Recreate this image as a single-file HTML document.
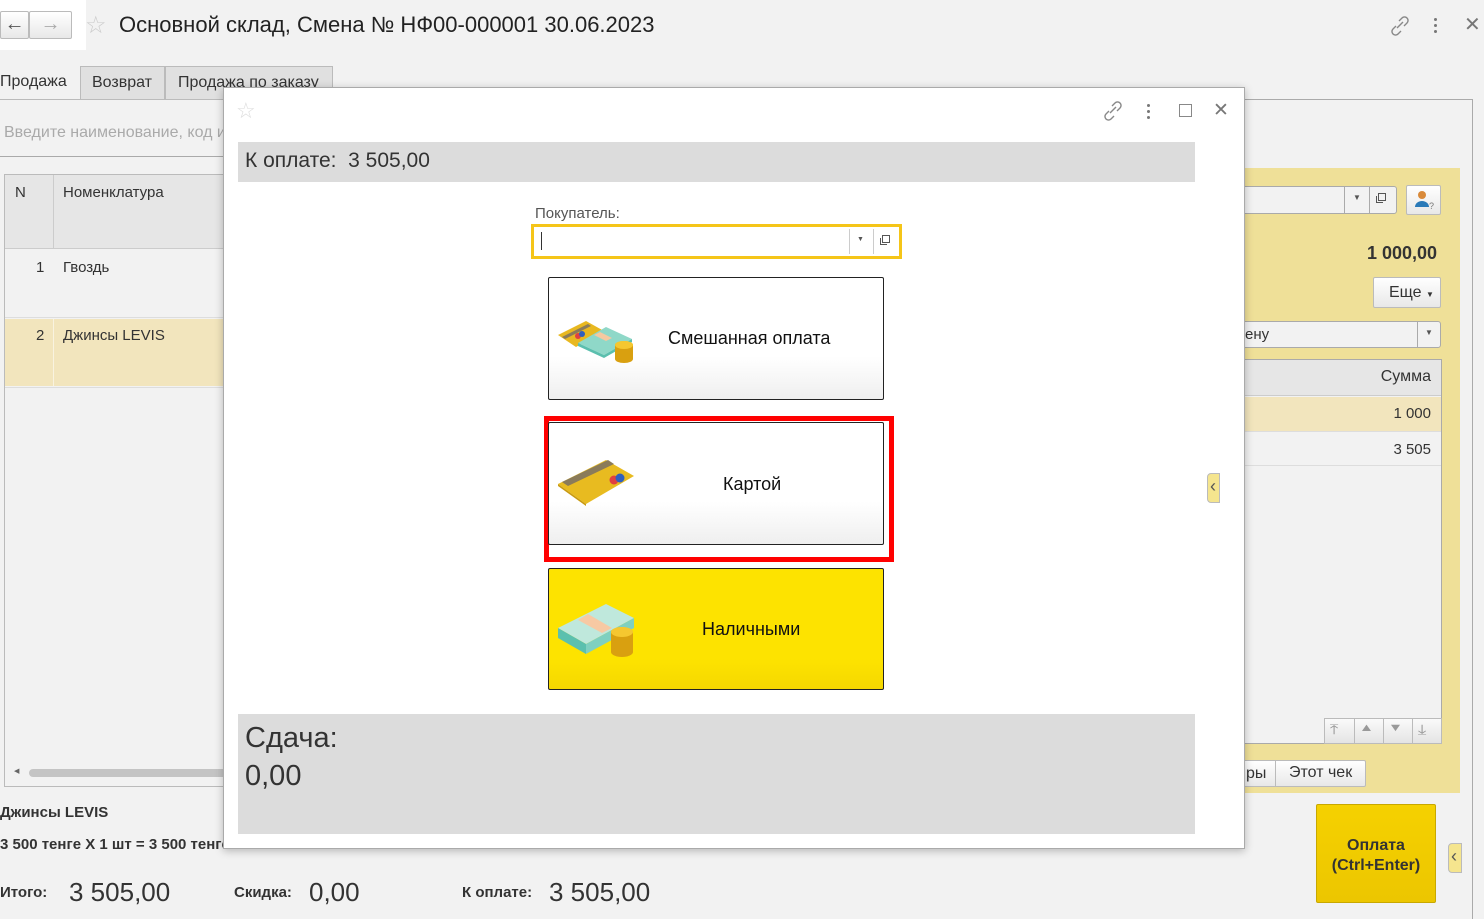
<!DOCTYPE html>
<html><head><meta charset="utf-8"><style>
*{box-sizing:border-box;margin:0;padding:0}
body{width:1484px;height:919px;overflow:hidden;background:#f2f2f2;font-family:"Liberation Sans",Arial,sans-serif;color:#333;position:relative}
.a{position:absolute}
.btnp{border:1px solid #bbb;border-radius:2px;background:linear-gradient(#fff,#e8e8e8)}
</style></head><body>
<!-- top nav -->
<div class="a" style="left:0;top:0;width:86px;height:50px;background:#fff"></div>
<div class="a btnp" style="left:0;top:11px;width:29px;height:28px;font-size:20px;font-weight:bold;color:#555;text-align:center;line-height:25px">&#8592;</div>
<div class="a btnp" style="left:29px;top:11px;width:43px;height:28px;font-size:20px;font-weight:bold;color:#aaa;text-align:center;line-height:25px">&#8594;</div>
<div class="a" style="left:85px;top:11px;font-size:24px;color:#ccc">&#9734;</div>
<div class="a" style="left:119px;top:12px;font-size:22px;color:#222">Основной склад, Смена № НФ00-000001 30.06.2023</div>
<svg class="a" style="left:1388px;top:15px" width="24" height="22" viewBox="0 0 24 22"><g fill="none" stroke="#888" stroke-width="1.4"><path d="M9 13 L15 7"/><path d="M11 6 l3-3 a3 3 0 0 1 5 5 l-3 3"/><path d="M13 16 l-3 3 a3 3 0 0 1 -5 -5 l3 -3"/></g></svg>
<div class="a" style="left:1434px;top:18px;width:4px"><div style="width:3px;height:3px;background:#777;border-radius:50%;margin-bottom:3px"></div><div style="width:3px;height:3px;background:#777;border-radius:50%;margin-bottom:3px"></div><div style="width:3px;height:3px;background:#777;border-radius:50%"></div></div>
<div class="a" style="left:1464px;top:12px;font-size:20px;color:#777">&#10005;</div>

<!-- tabs -->
<div class="a" style="left:0;top:66px;width:80px;height:34px;background:#f2f2f2;font-size:16px;padding:7px 0 0 0">Продажа</div>
<div class="a" style="left:80px;top:66px;width:85px;height:33px;background:#e0e0e0;border:1px solid #bbb;border-bottom:none;font-size:16px;padding:7px 0 0 11px">Возврат</div>
<div class="a" style="left:165px;top:66px;width:168px;height:33px;background:#e0e0e0;border:1px solid #bbb;border-bottom:none;font-size:16px;padding:7px 0 0 12px">Продажа по заказу</div>
<div class="a" style="left:0;top:99px;width:1245px;height:1px;background:#bbb"></div>
<div class="a" style="left:4px;top:124px;font-size:16px;color:#aaa">Введите наименование, код и</div>
<div class="a" style="left:0;top:156px;width:230px;height:1px;background:#aaa"></div>

<!-- left table -->
<div class="a" style="left:4px;top:174px;width:220px;height:613px;border:1px solid #bbb;background:#f2f2f2"></div>
<div class="a" style="left:5px;top:175px;width:219px;height:74px;background:#e6e6e6;border-bottom:1px solid #ccc"></div>
<div class="a" style="left:53px;top:175px;width:1px;height:74px;background:#ccc"></div>
<div class="a" style="left:15px;top:184px;font-size:15px">N</div>
<div class="a" style="left:63px;top:184px;font-size:15px">Номенклатура</div>
<div class="a" style="left:5px;top:317px;width:219px;height:1px;background:#ddd"></div>
<div class="a" style="left:36px;top:259px;font-size:15px">1</div>
<div class="a" style="left:63px;top:259px;font-size:15px">Гвоздь</div>
<div class="a" style="left:5px;top:319px;width:219px;height:67px;background:#f2e5bd"></div>
<div class="a" style="left:53px;top:319px;width:1px;height:67px;background:#fff8"></div>
<div class="a" style="left:36px;top:327px;font-size:15px">2</div>
<div class="a" style="left:63px;top:327px;font-size:15px">Джинсы LEVIS</div>
<div class="a" style="left:5px;top:387px;width:219px;height:1px;background:#ddd"></div>
<div class="a" style="left:29px;top:769px;width:200px;height:8px;background:#c4c4c4;border-radius:4px"></div>
<div class="a" style="left:14px;top:767px;font-size:7px;color:#666">&#9664;</div>

<!-- bottom -->
<div class="a" style="left:0;top:804px;font-size:15px;font-weight:bold;color:#333">Джинсы LEVIS</div>
<div class="a" style="left:0;top:836px;font-size:15px;font-weight:bold;color:#333">3 500 тенге X 1 шт = 3 500 тенге</div>
<div class="a" style="left:0;top:884px;font-size:15px;font-weight:bold">Итого:</div>
<div class="a" style="left:69px;top:877px;font-size:26px">3 505,00</div>
<div class="a" style="left:234px;top:884px;font-size:15px;font-weight:bold">Скидка:</div>
<div class="a" style="left:309px;top:877px;font-size:26px">0,00</div>
<div class="a" style="left:462px;top:884px;font-size:15px;font-weight:bold">К оплате:</div>
<div class="a" style="left:549px;top:877px;font-size:26px">3 505,00</div>

<!-- right panel -->
<div class="a" style="left:1240px;top:99px;width:233px;height:820px;border-top:1px solid #aaa;border-right:1px solid #aaa;background:#f2f2f2"></div>
<div class="a" style="left:1240px;top:168px;width:220px;height:625px;background:#efe098"></div>
<div class="a" style="left:1240px;top:186px;width:157px;height:28px;background:#f2f2f2;border:1px solid #aaa;border-radius:3px"></div>
<div class="a" style="left:1344px;top:186px;width:1px;height:28px;background:#aaa"></div>
<div class="a" style="left:1369px;top:186px;width:1px;height:28px;background:#aaa"></div>
<div class="a" style="left:1353px;top:193px;font-size:8px;color:#555">&#9660;</div>
<div class="a" style="left:1378px;top:193px;width:8px;height:8px;border:1px solid #555;background:#f2f2f2"></div>
<div class="a" style="left:1376px;top:196px;width:7px;height:7px;border:1px solid #555;border-top:none;border-right:none"></div>
<div class="a btnp" style="left:1406px;top:185px;width:35px;height:30px"></div>
<svg class="a" style="left:1413px;top:189px" width="24" height="22"><circle cx="9" cy="6" r="4" fill="#d98a3a"/><path d="M2 18 a7 6 0 0 1 14 0z" fill="#2a7ab8"/><text x="16" y="20" font-size="9" fill="#777" font-family="Liberation Sans">?</text></svg>
<div class="a" style="left:1367px;top:243px;font-size:18px;font-weight:bold;color:#333">1 000,00</div>
<div class="a btnp" style="left:1373px;top:277px;width:68px;height:31px;font-size:16px;padding:6px 0 0 15px">Еще <span style="font-size:8px">&#9660;</span></div>
<div class="a" style="left:1240px;top:321px;width:201px;height:27px;background:#f2f2f2;border:1px solid #aaa;border-radius:3px;font-size:15px;padding:4px 0 0 4px">ену</div>
<div class="a" style="left:1417px;top:321px;width:1px;height:27px;background:#aaa"></div>
<div class="a" style="left:1425px;top:328px;font-size:8px;color:#555">&#9660;</div>
<div class="a" style="left:1240px;top:359px;width:202px;height:385px;background:#f2f2f2;border:1px solid #aaa"></div>
<div class="a" style="left:1241px;top:360px;width:200px;height:36px;background:#e6e6e6;border-bottom:1px solid #ccc;font-size:16px;text-align:right;padding:8px 10px 0 0">Сумма</div>
<div class="a" style="left:1241px;top:397px;width:200px;height:34px;background:#f2e5bd;font-size:15px;text-align:right;padding:8px 10px 0 0">1 000</div>
<div class="a" style="left:1241px;top:431px;width:200px;height:35px;border-top:1px solid #ddd;border-bottom:1px solid #ddd;font-size:15px;text-align:right;padding:9px 10px 0 0">3 505</div>
<div class="a" style="left:1324px;top:718px;width:118px;height:26px;border:1px solid #bbb;background:linear-gradient(#fafafa,#e4e4e4)"></div>
<div class="a" style="left:1354px;top:718px;width:1px;height:26px;background:#bbb"></div>
<div class="a" style="left:1383px;top:718px;width:1px;height:26px;background:#bbb"></div>
<div class="a" style="left:1412px;top:718px;width:1px;height:26px;background:#bbb"></div>
<div class="a" style="left:1331px;top:721px;font-size:14px;color:#999;transform:scaleX(1.4)">&#10514;</div>
<div class="a" style="left:1361px;top:722px;font-size:11px;color:#999;transform:scaleX(1.4)">&#9650;</div>
<div class="a" style="left:1390px;top:722px;font-size:11px;color:#999;transform:scaleX(1.4)">&#9660;</div>
<div class="a" style="left:1419px;top:721px;font-size:14px;color:#999;transform:scaleX(1.4)">&#10515;</div>
<div class="a btnp" style="left:1240px;top:760px;width:126px;height:27px;font-size:16px;padding:4px 0 0 5px">ры</div>
<div class="a" style="left:1275px;top:761px;width:1px;height:25px;background:#bbb"></div>
<div class="a" style="left:1289px;top:764px;font-size:16px">Этот чек</div>
<div class="a" style="left:1316px;top:804px;width:120px;height:99px;background:linear-gradient(#f5d100,#ecc600);border:1px solid #c8a800;border-radius:2px;text-align:center;font-weight:bold;font-size:16px;color:#333;padding-top:31px;line-height:20px">Оплата<br>(Ctrl+Enter)</div>
<div class="a" style="left:1448px;top:843px;width:14px;height:30px;background:#f5e58e;border:1px solid #bbb;border-radius:4px 0 0 4px;font-size:18px;color:#555;padding:2px 0 0 2px">&lsaquo;</div>

<!-- modal -->
<div class="a" style="left:223px;top:87px;width:1022px;height:762px;background:#fff;border:1px solid #aaa;box-shadow:0 2px 8px rgba(0,0,0,.25)"></div>
<div class="a" style="left:236px;top:98px;font-size:22px;color:#ddd">&#9734;</div>
<svg class="a" style="left:1101px;top:100px" width="24" height="22" viewBox="0 0 24 22"><g fill="none" stroke="#888" stroke-width="1.4"><path d="M9 13 L15 7"/><path d="M11 6 l3-3 a3 3 0 0 1 5 5 l-3 3"/><path d="M13 16 l-3 3 a3 3 0 0 1 -5 -5 l3 -3"/></g></svg>
<div class="a" style="left:1147px;top:104px;width:4px"><div style="width:3px;height:3px;background:#777;border-radius:50%;margin-bottom:3px"></div><div style="width:3px;height:3px;background:#777;border-radius:50%;margin-bottom:3px"></div><div style="width:3px;height:3px;background:#777;border-radius:50%"></div></div>
<div class="a" style="left:1179px;top:104px;width:13px;height:13px;border:1.5px solid #888"></div>
<div class="a" style="left:1213px;top:99px;font-size:19px;color:#777">&#10005;</div>
<div class="a" style="left:238px;top:142px;width:957px;height:40px;background:#dcdcdc;font-size:21px;color:#333;padding:7px 0 0 7px">К оплате:&nbsp; 3 505,00</div>
<div class="a" style="left:535px;top:205px;font-size:15px;color:#555">Покупатель:</div>
<div class="a" style="left:531px;top:224px;width:371px;height:35px;border:3px solid #f5c518;background:#fff"></div>
<div class="a" style="left:541px;top:232px;width:1px;height:18px;background:#333"></div>
<div class="a" style="left:849px;top:229px;width:1px;height:25px;background:#ccc"></div>
<div class="a" style="left:873px;top:229px;width:1px;height:25px;background:#ccc"></div>
<div class="a" style="left:857px;top:236px;font-size:7px;color:#555">&#9660;</div>
<div class="a" style="left:882px;top:235px;width:8px;height:8px;border:1px solid #555;background:#fff"></div>
<div class="a" style="left:880px;top:238px;width:7px;height:7px;border:1px solid #555;border-top:none;border-right:none"></div>

<!-- payment buttons -->
<div class="a" style="left:548px;top:277px;width:336px;height:123px;border:1px solid #222;border-radius:2px;background:linear-gradient(#fff 65%,#efefef)"></div>
<svg class="a" style="left:556px;top:315px" width="80" height="48" viewBox="0 0 80 48">
<path d="M2 20 L30 6 L48 16 L20 32Z" fill="#e8b820"/><path d="M6 22 L32 9 L35 11 L9 24Z" fill="#8a7b5a"/><circle cx="22" cy="21" r="3" fill="#e04040"/><circle cx="26" cy="19" r="3" fill="#2f5fbf"/>
<path d="M22 28 L50 12 L76 24 L48 40Z" fill="#8fd8c8"/><path d="M22 31 L48 43 L76 27 L76 24 L48 40 L22 28Z" fill="#5bbfae"/><path d="M38 20 L50 26 L56 23 L44 17Z" fill="#f5c9a0"/>
<ellipse cx="68" cy="30" rx="9" ry="4" fill="#f2c020"/><rect x="59" y="30" width="18" height="14" fill="#d9a010"/><ellipse cx="68" cy="44" rx="9" ry="4" fill="#d9a010"/><ellipse cx="68" cy="30" rx="9" ry="4" fill="#f5c730"/></svg>
<div class="a" style="left:668px;top:328px;font-size:18px;color:#111">Смешанная оплата</div>

<div class="a" style="left:544px;top:416px;width:350px;height:146px;border:5px solid #f00"></div>
<div class="a" style="left:548px;top:422px;width:336px;height:123px;border:1px solid #222;border-radius:2px;background:linear-gradient(#fff 65%,#efefef)"></div>
<svg class="a" style="left:556px;top:456px" width="80" height="52" viewBox="0 0 80 52"><path d="M2 28 L50 4 L78 20 L30 48Z" fill="#e8bb20"/><path d="M2 28 L30 48 L30 50 L2 30Z" fill="#c99a10"/><path d="M6 26 L52 4 L58 8 L12 30Z" fill="#8a7b5a"/><circle cx="58" cy="24" r="4.5" fill="#e04040"/><circle cx="64" cy="22" r="4.5" fill="#2f5fbf"/></svg>
<div class="a" style="left:723px;top:474px;font-size:18px;color:#111">Картой</div>

<div class="a" style="left:548px;top:568px;width:336px;height:122px;border:1px solid #222;border-radius:2px;background:linear-gradient(#fde300 75%,#f5d800)"></div>
<svg class="a" style="left:556px;top:598px" width="80" height="62" viewBox="0 0 80 62">
<path d="M2 30 L50 6 L78 20 L30 46Z" fill="#bfe8dc"/><path d="M2 30 L30 46 L30 56 L2 40Z" fill="#5bc0ae"/><path d="M30 46 L78 20 L78 30 L30 56Z" fill="#7fd0c0"/><path d="M22 22 L46 35 L56 30 L32 16Z" fill="#f7c9a3"/>
<ellipse cx="66" cy="34" rx="11" ry="5" fill="#f2c020"/><rect x="55" y="34" width="22" height="20" fill="#d9a010"/><ellipse cx="66" cy="54" rx="11" ry="5" fill="#d9a010"/><ellipse cx="66" cy="34" rx="11" ry="5" fill="#f5c730"/></svg>
<div class="a" style="left:702px;top:619px;font-size:18px;color:#111">Наличными</div>

<div class="a" style="left:238px;top:714px;width:957px;height:120px;background:#dcdcdc;font-size:29px;color:#333;padding:5px 0 0 7px;line-height:38px">Сдача:<br>0,00</div>
<div class="a" style="left:1207px;top:473px;width:13px;height:30px;background:#f5e58e;border:1px solid #bbb;border-radius:4px 0 0 4px;font-size:18px;color:#555;padding:2px 0 0 2px">&lsaquo;</div>
</body></html>
